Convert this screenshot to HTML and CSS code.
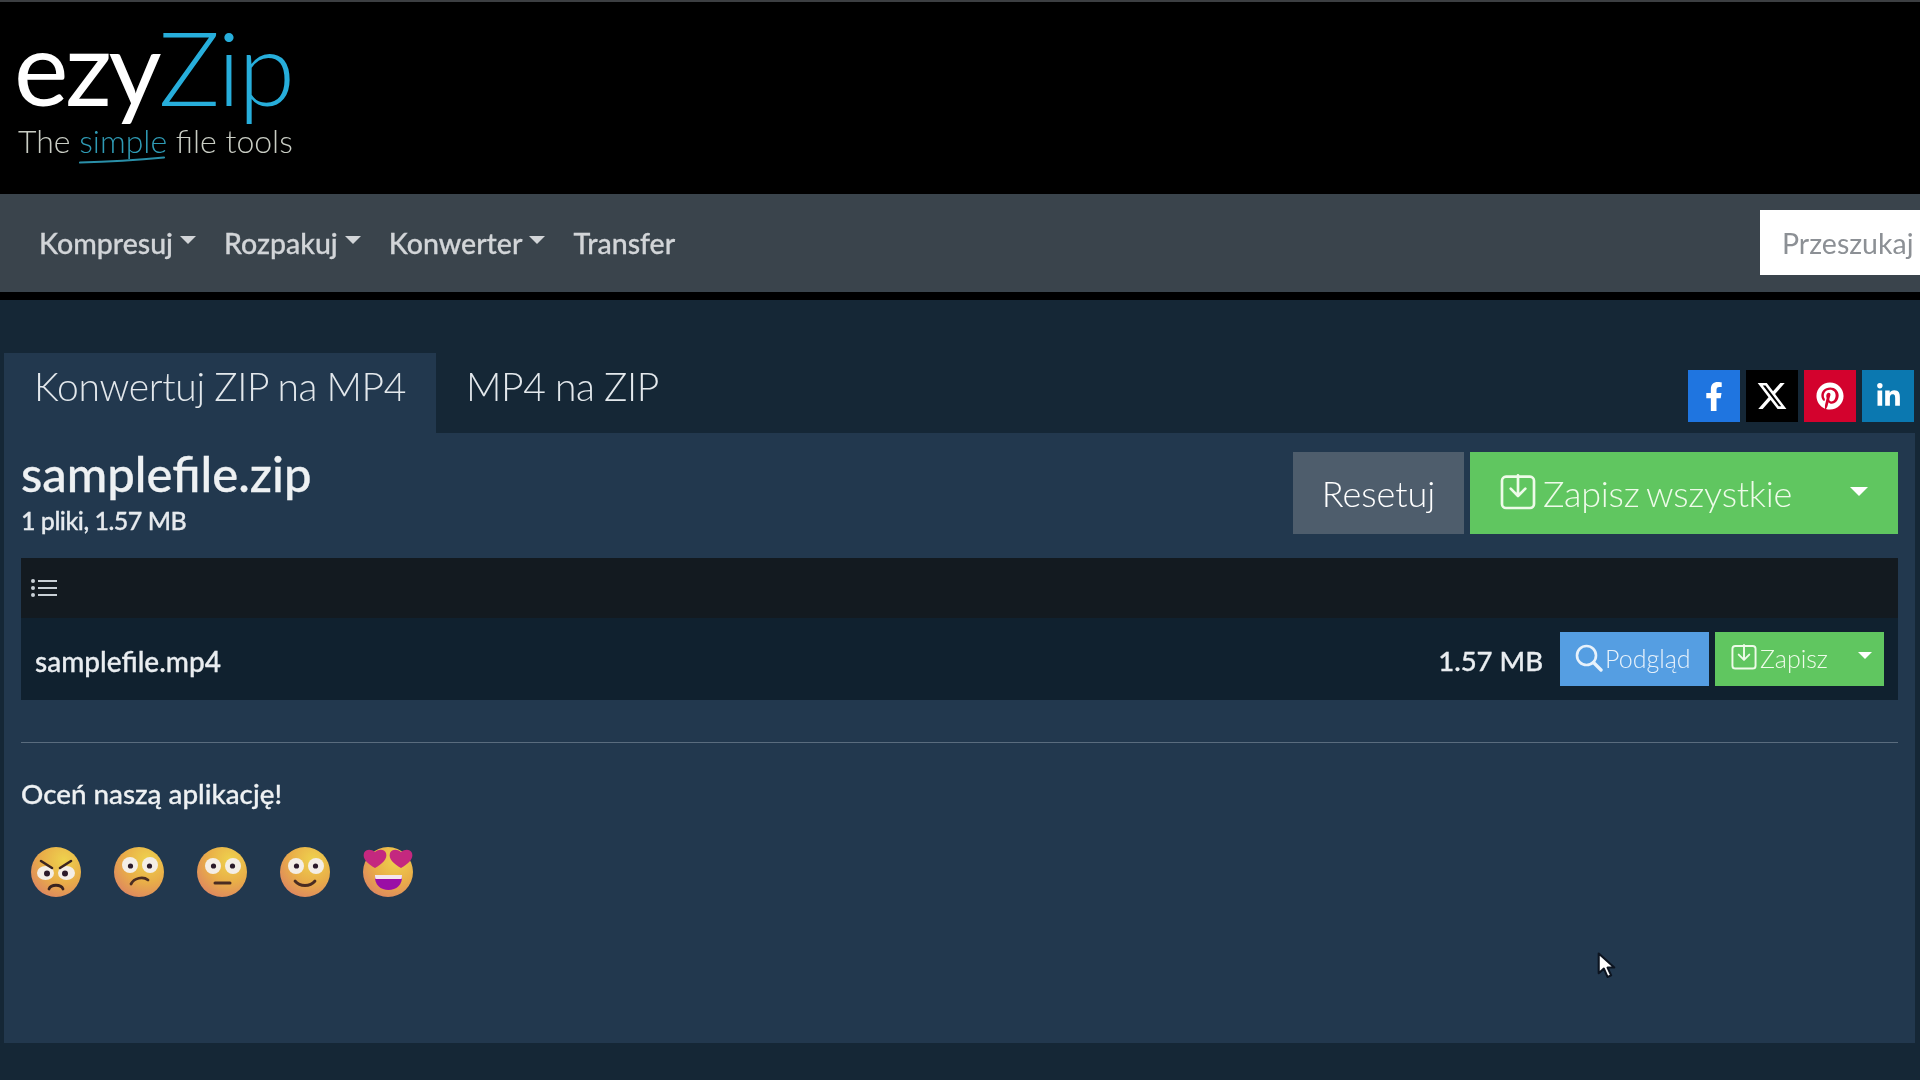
FILE: index.html
```html
<!DOCTYPE html>
<html lang="pl">
<head>
<meta charset="utf-8">
<title>ezyZip</title>
<link rel="stylesheet" href="styles.css">
</head>
<body>
<svg class="defs" width="0" height="0" aria-hidden="true">
  <defs>
    <radialGradient id="face" cx="0.66" cy="0.26" r="0.9">
      <stop offset="0" stop-color="#eed24e"/>
      <stop offset="0.5" stop-color="#e9ae48"/>
      <stop offset="0.85" stop-color="#df8c5c"/>
      <stop offset="1" stop-color="#c9728a"/>
    </radialGradient>
    <symbol id="save" viewBox="0 0 27 27">
      <rect x="1.500" y="2" width="24" height="23.500" rx="3" fill="none" stroke="currentColor" stroke-width="2"/>
      <path d="M13.500 1v15M8 11l5.500 5.500L19 11" fill="none" stroke="currentColor" stroke-width="2" stroke-linecap="round" stroke-linejoin="round"/>
    </symbol>
    <symbol id="face-base" viewBox="0 0 52 52">
      <circle cx="26" cy="26" r="25" fill="url(#face)"/>
    </symbol>
  </defs>
</svg>
<header class="brand">
  <div class="logo">
    <div class="logo-word"><span class="ezy">ezy</span><span class="zip">Zip</span></div>
    <div class="tagline">The <span class="simple">simple<svg class="swoosh" viewBox="0 0 86 8"><path d="M1 6.500C25 6 60 4 85 1.500" fill="none" stroke="#2a8fa8" stroke-width="2.200" stroke-linecap="round"/></svg></span> file tools</div>
  </div>
</header>
<nav class="navbar">
  <ul class="menu">
    <li class="menu-item has-caret">Kompresuj</li>
    <li class="menu-item has-caret">Rozpakuj</li>
    <li class="menu-item has-caret">Konwerter</li>
    <li class="menu-item">Transfer</li>
  </ul>
  <div class="search">Przeszukaj</div>
</nav>
<main class="main">
  <div class="tabbar">
    <div class="tabs">
      <div class="tab active">Konwertuj ZIP na MP4</div>
      <div class="tab">MP4 na ZIP</div>
    </div>
    <div class="social">
      <a class="share fb"><svg viewBox="0 0 320 512" class="ico-f"><path fill="#fff" d="M279.14 288l14.22-92.66h-88.91v-60.13c0-25.35 12.42-50.06 52.24-50.06h40.42V6.26S260.43 0 225.36 0c-73.22 0-121.08 44.38-121.08 124.72v70.62H22.89V288h81.39v224h100.17V288z"/></svg></a>
      <a class="share xx"><svg viewBox="0 0 512 512" class="ico-x"><path fill="#fff" d="M389.2 48h70.6L305.6 224.2 487 464H345L233.7 318.6 106.5 464H35.8L200.7 275.5 26.8 48H172.4L272.9 180.9 389.2 48zM364.4 421.8h39.1L151.1 88h-42L364.4 421.8z"/></svg></a>
      <a class="share pin"><svg viewBox="0 0 496 512" class="ico-p"><path fill="#fff" d="M496 256c0 137-111 248-248 248-25.6 0-50.2-3.9-73.4-11.1 10.1-16.5 25.2-43.5 30.8-65 3-11.6 15.4-59 15.4-59 8.1 15.4 31.7 28.5 56.8 28.5 74.8 0 128.7-68.8 128.7-154.3 0-81.9-66.9-143.2-152.9-143.2-107 0-163.9 71.8-163.9 150.1 0 36.4 19.4 81.7 50.3 96.1 4.7 2.2 7.2 1.2 8.3-3.3.8-3.4 5-20.3 6.9-28.1.6-2.5.3-4.7-1.7-7.1-10.1-12.5-18.3-35.3-18.3-56.6 0-54.7 41.4-107.6 112-107.6 60.9 0 103.6 41.5 103.6 100.9 0 67.1-33.9 113.6-78 113.6-24.3 0-42.6-20.1-36.7-44.8 7-29.5 20.5-61.3 20.5-82.6 0-19-10.2-34.9-31.4-34.9-24.9 0-44.9 25.7-44.9 60.2 0 22 7.4 36.8 7.4 36.8s-24.5 103.8-29 123.2c-5 21.4-3 51.6-.9 71.2C65.4 450.9 0 361.1 0 256 0 119 111 8 248 8s248 111 248 248z"/></svg></a>
      <a class="share li"><svg viewBox="0 0 448 512" class="ico-l"><path fill="#fff" d="M100.28 448H7.4V148.9h92.88zM53.79 108.1C24.09 108.1 0 83.5 0 53.8a53.79 53.79 0 0 1 107.58 0c0 29.7-24.1 54.3-53.79 54.3zM447.9 448h-92.68V302.4c0-34.7-.7-79.2-48.29-79.2-48.29 0-55.69 37.7-55.69 76.7V448h-92.78V148.9h89.08v40.8h1.3c12.4-23.5 42.69-48.3 87.88-48.3 94 0 111.28 61.9 111.28 142.3V448z"/></svg></a>
    </div>
  </div>
  <section class="panel">
    <div class="panel-head">
      <div class="title-block">
        <h1 class="title">samplefile.zip</h1>
        <div class="subtitle">1 pliki, 1.57 MB</div>
      </div>
      <div class="actions">
        <button class="btn btn-reset">Resetuj</button>
        <button class="btn btn-saveall">
          <svg class="ico-save-lg"><use href="#save"/></svg>
          <span class="btn-label">Zapisz wszystkie</span>
          <span class="caret caret-lg"></span>
        </button>
      </div>
    </div>
    <div class="filelist">
      <div class="filelist-head">
        <svg class="ico-list" viewBox="0 0 26 20"><g fill="#c9d0d6"><circle cx="2" cy="3" r="2"/><circle cx="2" cy="10" r="2"/><circle cx="2" cy="17" r="2"/><rect x="7" y="2" width="19" height="2"/><rect x="7" y="9" width="19" height="2"/><rect x="7" y="16" width="19" height="2"/></g></svg>
      </div>
      <div class="filerow">
        <span class="filename">samplefile.mp4</span>
        <span class="filesize">1.57 MB</span>
        <button class="btn btn-preview">
          <svg class="ico-search" viewBox="0 0 28 28"><circle cx="11.5" cy="11.5" r="9.5" fill="none" stroke="currentColor" stroke-width="2.6"/><path d="M18.5 18.5L26 26" stroke="currentColor" stroke-width="3.4" stroke-linecap="round"/></svg>
          <span>Podgląd</span>
        </button>
        <button class="btn btn-save">
          <svg class="ico-save-sm"><use href="#save"/></svg>
          <span class="btn-label">Zapisz</span>
          <span class="caret"></span>
        </button>
      </div>
    </div>
    <hr class="rule">
    <h2 class="rate-title">Oceń naszą aplikację!</h2>
    <div class="emojis">
      <svg class="emoji" viewBox="0 0 52 52"><use href="#face-base"/><g fill="#f4eee6"><ellipse cx="15.500" cy="27" rx="8.500" ry="7"/><ellipse cx="36.500" cy="27" rx="8.500" ry="7"/></g><g fill="#2b1a2a"><circle cx="17" cy="27.500" r="3"/><circle cx="35" cy="27.500" r="3"/></g><path d="M11 15l11 7M41 15l-11 7" stroke="#3a2420" stroke-width="2.600" stroke-linecap="round"/><path d="M19 43c2-5 12-5 14 0" fill="none" stroke="#3a2420" stroke-width="2.800" stroke-linecap="round"/></svg>
      <svg class="emoji" viewBox="0 0 52 52"><use href="#face-base"/><g fill="#f4eee6"><circle cx="17" cy="19" r="8"/><circle cx="37" cy="19" r="8"/></g><g fill="#2b1a2a"><circle cx="17.500" cy="20" r="2.600"/><circle cx="36.500" cy="20" r="2.600"/></g><path d="M18 38c3-6 12-8 17-4" fill="none" stroke="#4a2c22" stroke-width="2.800" stroke-linecap="round"/></svg>
      <svg class="emoji" viewBox="0 0 52 52"><use href="#face-base"/><g fill="#f4eee6"><circle cx="17" cy="20" r="8"/><circle cx="37" cy="20" r="8"/></g><g fill="#2b1a2a"><circle cx="17.500" cy="20" r="2.600"/><circle cx="36.500" cy="20" r="2.600"/></g><path d="M19 37h15" stroke="#4a2c22" stroke-width="3" stroke-linecap="round"/></svg>
      <svg class="emoji" viewBox="0 0 52 52"><use href="#face-base"/><g fill="#f4eee6"><circle cx="17" cy="20" r="8"/><circle cx="37" cy="20" r="8"/></g><g fill="#2b1a2a"><circle cx="17.500" cy="20" r="2.600"/><circle cx="36.500" cy="20" r="2.600"/></g><path d="M16 35c5 6 15 6 20 0" fill="none" stroke="#4a2c22" stroke-width="2.800" stroke-linecap="round"/></svg>
      <svg class="emoji" viewBox="0 0 52 52"><use href="#face-base"/><path d="M13 29h27c1 10-6 15-13.500 15S12 39 13 29z" fill="#9a0ea6"/><path d="M13 29h27c0 2-.2 3-.5 4h-26c-.3-1-.5-2-.5-4z" fill="#f3e6ee"/><g fill="#c4287f"><path d="M13 22C6 18 0 13 2 7c2-4 7-4 11-1 4-3 9-3 11 1 2 6-4 11-11 15z"/><path d="M39 22c-7-4-13-9-11-15 2-4 7-4 11-1 4-3 9-3 11 1 2 6-4 11-11 15z"/></g></svg>
    </div>
  </section>
</main>
<svg class="cursor" viewBox="0 0 18 26"><path d="M1.500 1.500v19l5-4.500 3.500 8 3.500-1.500-3.500-7.500h6.500z" fill="#fff" stroke="#0c1420" stroke-width="2" stroke-linejoin="round"/></svg>
</body>
</html>
```
FILE: styles.css
```css
* { box-sizing: border-box; }
html, body { margin: 0; padding: 0; }
html { background: #152736; overflow: hidden; }
body {
  width: 1920px;
  height: 1080px;
  overflow: hidden;
  position: relative;
  background: #152736;
  color: #e9edf0;
  font-family: "Lato", "Liberation Sans", sans-serif;
  filter: blur(0.5px);
}
.defs { position: absolute; }

.brand {
  height: 194px;
  background: #000;
  border-top: 2px solid #3c3f42;
  padding: 8px 0 0 14px;
}
.logo { width: 320px; }
.logo-word {
  font-family: "Lato", sans-serif;
  font-size: 103px;
  line-height: 112px;
  letter-spacing: -2.2px;
}
.ezy { color: #fff; font-weight: 400; letter-spacing: -3.2px; }
.zip { color: #27aedb; font-weight: 300; }
.tagline {
  font-weight: 300;
  font-size: 32px;
  line-height: 32px;
  color: #c9cdc4;
  margin-left: 4px;
  margin-top: 3px;
  white-space: nowrap;
}
.simple { color: #2f9bb5; position: relative; display: inline-block; }
.swoosh { position: absolute; left: 0; top: 31px; width: 86px; height: 8px; }

.navbar {
  height: 106px;
  background: #3a444c;
  border-bottom: 8px solid #000;
  display: flex;
  align-items: center;
  justify-content: space-between;
  padding-left: 39px;
}
.menu { display: flex; gap: 28px; list-style: none; margin: 0; padding: 0; }
.menu-item {
  font-size: 28.5px;
  font-weight: 500;
  color: #d2d5d8;
  display: flex;
  align-items: center;
  -webkit-text-stroke: 0.3px #d2d5d8;
}
.has-caret::after {
  content: "";
  border-top: 8px solid #d2d5d8;
  border-left: 8px solid transparent;
  border-right: 8px solid transparent;
  margin-left: 7px;
  margin-top: -6px;
}
.search {
  width: 300px;
  height: 65px;
  margin-top: -2px;
  margin-right: -140px;
  background: #fff;
  color: #8c9095;
  font-size: 28.5px;
  line-height: 67px;
  padding-left: 22px;
  flex: none;
}

.main { padding-top: 53px; }
.tabbar {
  display: flex;
  justify-content: space-between;
  height: 80px;
  padding-left: 4px;
  padding-right: 6px;
}
.tabs { display: flex; }
.tab {
  font-size: 39px;
  font-weight: 300;
  letter-spacing: -0.3px;
  word-spacing: -1px;
  padding: 8px 30px 0 30px;
  color: #e3e8ec;
  line-height: 50px;
  white-space: nowrap;
}
.tab.active { background: #22384e; width: 432px; }
.social { display: flex; gap: 6px; padding-top: 17px; }
.share {
  width: 52px;
  height: 52px;
  display: flex;
  align-items: center;
  justify-content: center;
}
.fb { background: #1f75e0; }
.xx { background: #000; }
.pin { background: #d3022d; }
.li { background: #0b78b0; }
.ico-f { height: 29px; width: 18px; }
.ico-x { height: 32px; width: 32px; }
.ico-p { height: 28px; width: 28px; }
.ico-l { height: 26px; width: 23px; }

.panel {
  margin-left: 4px;
  width: 1911px;
  height: 610px;
  background: #22384e;
  padding: 19px 17px 0 17px;
}
.panel-head { display: flex; justify-content: space-between; height: 82px; }
.title { margin: -2px 0 0; font-size: 49px; font-weight: 500; line-height: 46px; color: #eef1f3; -webkit-text-stroke: 0.3px #eef1f3; }
.subtitle { font-size: 25px; font-weight: 500; line-height: 30px; margin-top: 9px; letter-spacing: -0.5px; color: #e6eaee; -webkit-text-stroke: 0.3px #e6eaee; }
.actions { display: flex; gap: 6px; }
.btn {
  border: 0;
  font-family: inherit;
  color: #fff;
  display: flex;
  align-items: center;
  padding: 0;
}
.btn-reset {
  width: 171px;
  height: 82px;
  background: #4e5d6c;
  font-size: 36px;
  font-weight: 300;
  justify-content: center;
}
.btn-saveall {
  width: 428px;
  height: 82px;
  background: #60c660;
  color: #eefbe9;
  font-size: 36px;
  font-weight: 300;
  letter-spacing: -0.25px;
  word-spacing: -2px;
  padding: 0 24px 0 30px;
  justify-content: flex-start;
}
.ico-save-lg { width: 36px; height: 36px; margin-right: 7px; flex: none; margin-top: -2px; }
.btn-saveall .btn-label { flex: 1; text-align: left; }
.caret {
  border-top: 9px solid #fff;
  border-left: 9px solid transparent;
  border-right: 9px solid transparent;
}
.caret-lg { margin-top: -4px; margin-right: 6px; }

.filelist { margin-top: 24px; }
.filelist-head {
  height: 60px;
  background: #131a20;
  display: flex;
  align-items: center;
  padding-left: 10px;
}
.ico-list { width: 26px; height: 20px; }
.filerow {
  height: 82px;
  background: #10212f;
  display: flex;
  align-items: center;
  padding: 0 14px;
}
.filename { flex: 1; font-size: 28px; font-weight: 500; margin-top: 3px; -webkit-text-stroke: 0.3px #e9edf0; }
.filesize { font-size: 27.5px; font-weight: 500; margin: 3px 17px 0 0; -webkit-text-stroke: 0.3px #e9edf0; }
.btn-preview {
  width: 149px;
  height: 54px;
  background: #559ee2;
  color: #e8f2fb;
  font-size: 25px;
  font-weight: 300;
  padding: 0 0 2px 15px;
  gap: 2px;
  margin-right: 6px;
}
.ico-search { width: 28px; height: 28px; }
.btn-save {
  width: 169px;
  height: 54px;
  background: #60c660;
  color: #eefbe9;
  font-size: 25px;
  font-weight: 300;
  padding: 0 12px 2px 16px;
}
.ico-save-sm { width: 26px; height: 26px; margin-right: 3px; margin-top: -2px; flex: none; }
.btn-save .btn-label { flex: 1; text-align: left; }
.btn-save .caret { border-width: 7px 7px 0; margin-top: -6px; }

.rule { margin: 42px 0 0; border: 0; border-top: 1px solid #5a6c7e; }
.rate-title { margin: 34px 0 0; font-size: 27.8px; font-weight: 500; line-height: 34px; color: #eef1f3; -webkit-text-stroke: 0.3px #eef1f3; }
.emojis { display: flex; gap: 31px; margin-top: 35px; padding-left: 9px; }
.emoji { width: 52px; height: 52px; flex: none; }
.cursor { position: absolute; left: 1597px; top: 952px; width: 19px; height: 27px; }
```
